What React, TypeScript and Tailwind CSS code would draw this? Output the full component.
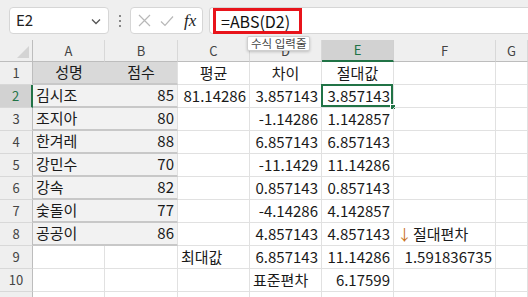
import React from 'react';

type Cell = { t?: string; a?: 'l' | 'r' | 'c'; node?: React.ReactNode };

const COLS = ['A', 'B', 'C', 'D', 'E', 'F', 'G'];

const ROWS: Cell[][] = [
  [{ t: '성명', a: 'c' }, { t: '점수', a: 'c' }, { t: '평균', a: 'c' }, { t: '차이', a: 'c' }, { t: '절대값', a: 'c' }, {}, {}],
  [{ t: '김시조' }, { t: '85', a: 'r' }, { t: '81.14286', a: 'r' }, { t: '3.857143', a: 'r' }, { t: '3.857143', a: 'r' }, {}, {}],
  [{ t: '조지아' }, { t: '80', a: 'r' }, {}, { t: '-1.14286', a: 'r' }, { t: '1.142857', a: 'r' }, {}, {}],
  [{ t: '한겨레' }, { t: '88', a: 'r' }, {}, { t: '6.857143', a: 'r' }, { t: '6.857143', a: 'r' }, {}, {}],
  [{ t: '강민수' }, { t: '70', a: 'r' }, {}, { t: '-11.1429', a: 'r' }, { t: '11.14286', a: 'r' }, {}, {}],
  [{ t: '강속' }, { t: '82', a: 'r' }, {}, { t: '0.857143', a: 'r' }, { t: '0.857143', a: 'r' }, {}, {}],
  [{ t: '숯돌이' }, { t: '77', a: 'r' }, {}, { t: '-4.14286', a: 'r' }, { t: '4.142857', a: 'r' }, {}, {}],
  [
    { t: '공공이' }, { t: '86', a: 'r' }, {}, { t: '4.857143', a: 'r' }, { t: '4.857143', a: 'r' },
    { node: (<span className="flex items-center"><span className="text-[#c9731c] text-[15px] mr-[1px]">↓</span>절대편차</span>) },
    {},
  ],
  [{}, {}, { t: '최대값' }, { t: '6.857143', a: 'r' }, { t: '11.14286', a: 'r' }, { t: '1.591836735', a: 'r' }, {}],
  [{}, {}, {}, { t: '표준편차' }, { t: '6.17599', a: 'r' }, {}, {}],
  [{}, {}, {}, {}, {}, {}, {}],
];

const font = { fontFamily: '"Noto Sans CJK KR", "Noto Sans", sans-serif' };

function CellView({ r, c, cell }: { r: number; c: number; cell: Cell }) {
  const inTable = r < 8 && c < 2;
  const isHead = r === 0 && c < 2;
  const selected = r === 1 && c === 4;
  const align = cell.a === 'r' ? 'justify-end' : cell.a === 'c' ? 'justify-center' : 'justify-start';
  let cls = 'relative flex items-center h-[23px] px-[3px] text-[15px] text-[#1a1a1a] whitespace-nowrap overflow-visible ' + align;
  if (inTable) {
    cls += isHead ? ' bg-[#d9d9d9]' : ' bg-[#f2f2f2]';
    cls += ' border-b-2 border-[#c8c8c8]';
    if (c === 1) cls += ' border-r border-r-[#e1e1e1]';
  } else {
    cls += ' border-r border-b border-[#e1e1e1]';
  }
  return (
    <div className={cls}>
      {cell.node ?? cell.t}
      {selected && (
        <>
          <div className="absolute -left-[1px] -top-[1px] right-0 bottom-0 border-2 border-[#217346] pointer-events-none" />
          <div className="absolute -right-[3px] -bottom-[3px] w-[6px] h-[6px] bg-[#217346] border border-white" />
        </>
      )}
    </div>
  );
}

export default function App() {
  return (
    <div className="relative w-[528px] h-[297px] overflow-hidden bg-white" style={font}>
      {/* formula bar */}
      <div className="h-[40px] bg-[#efefef] flex items-start pt-[7px]">
        <div className="ml-[9px] w-[100px] h-[27px] bg-white border border-[#d6d6d6] rounded-[4px] flex items-center justify-between pl-[6px] pr-[6px]">
          <span className="text-[15px] text-[#222]">E2</span>
          <svg width="12" height="12" viewBox="0 0 12 12" fill="none" stroke="#555" strokeWidth="1.3">
            <path d="M2 4.5 L6 8.5 L10 4.5" />
          </svg>
        </div>
        <div className="w-[21px] h-[27px] flex flex-col items-center justify-center gap-[3px]">
          <span className="w-[2px] h-[2px] bg-[#888]" />
          <span className="w-[2px] h-[2px] bg-[#888]" />
          <span className="w-[2px] h-[2px] bg-[#888]" />
        </div>
        <div className="w-[73px] h-[27px] bg-white border border-[#d6d6d6] rounded-[4px] flex items-center pl-[7px] gap-[9px]">
          <svg width="13" height="13" viewBox="0 0 13 13" stroke="#b8b8b8" strokeWidth="1.2" fill="none">
            <path d="M1 1 L12 12 M12 1 L1 12" />
          </svg>
          <svg width="14" height="12" viewBox="0 0 14 12" stroke="#b8b8b8" strokeWidth="1.2" fill="none">
            <path d="M1 6.5 L5 10.5 L13 1.5" />
          </svg>
          <span className="text-[17px] italic text-[#222] ml-[1px]" style={{ fontFamily: '"Liberation Serif", serif' }}>fx</span>
        </div>
        <div className="ml-[6px] flex-1 h-[27px] bg-white border-y border-l border-[#d6d6d6] rounded-l-[4px] flex items-center pl-[3px]">
          <div className="h-[26px] w-[89px] border-[3px] border-[#e8141b] flex items-center pl-[5px]">
            <span className="text-[16px] text-[#111]">=ABS(D2)</span>
          </div>
        </div>
      </div>

      {/* tooltip */}
      <div className="absolute left-[247px] top-[36px] h-[15px] px-[3px] bg-white border border-[#cfcfcf] rounded-[2px] shadow-[0_1px_3px_rgba(0,0,0,0.2)] flex items-center text-[11.5px] text-[#444] z-10">
        수식 입력줄
      </div>

      {/* grid */}
      <div className="grid grid-cols-[33px_72px_73px_72px_72px_72px_102px_1fr]">
        <div className="h-[22px] bg-[#efefef] border-r border-b border-[#bdbdbd] relative">
          <svg className="absolute right-[3px] bottom-[3px]" width="12" height="12" viewBox="0 0 12 12">
            <path d="M12 0 L12 12 L0 12 Z" fill="#d4d4d4" />
          </svg>
        </div>
        {COLS.map((c) =>
          c === 'E' ? (
            <div key={c} className="h-[22px] bg-[#d2d2d2] border-b-2 border-[#217346] border-r border-r-[#d0d0d0] flex items-center justify-center text-[13px] text-[#217346]">
              {c}
            </div>
          ) : (
            <div key={c} className="h-[22px] bg-[#efefef] border-r border-[#d8d8d8] border-b border-b-[#bdbdbd] flex items-center justify-center text-[13px] text-[#444]">
              {c}
            </div>
          ),
        )}
        {ROWS.map((row, r) => (
          <React.Fragment key={r}>
            {r === 1 ? (
              <div className="h-[23px] bg-[#d2d2d2] border-r-2 border-[#217346] border-b border-b-[#d8d8d8] flex items-center justify-center text-[13px] text-[#217346]">
                {r + 1}
              </div>
            ) : (
              <div className="h-[23px] bg-[#efefef] border-r border-[#bdbdbd] border-b border-b-[#d8d8d8] flex items-center justify-center text-[13px] text-[#444]">
                {r < 10 ? r + 1 : ''}
              </div>
            )}
            {row.map((cell, c) => (
              <CellView key={c} r={r} c={c} cell={cell} />
            ))}
          </React.Fragment>
        ))}
      </div>
    </div>
  );
}
